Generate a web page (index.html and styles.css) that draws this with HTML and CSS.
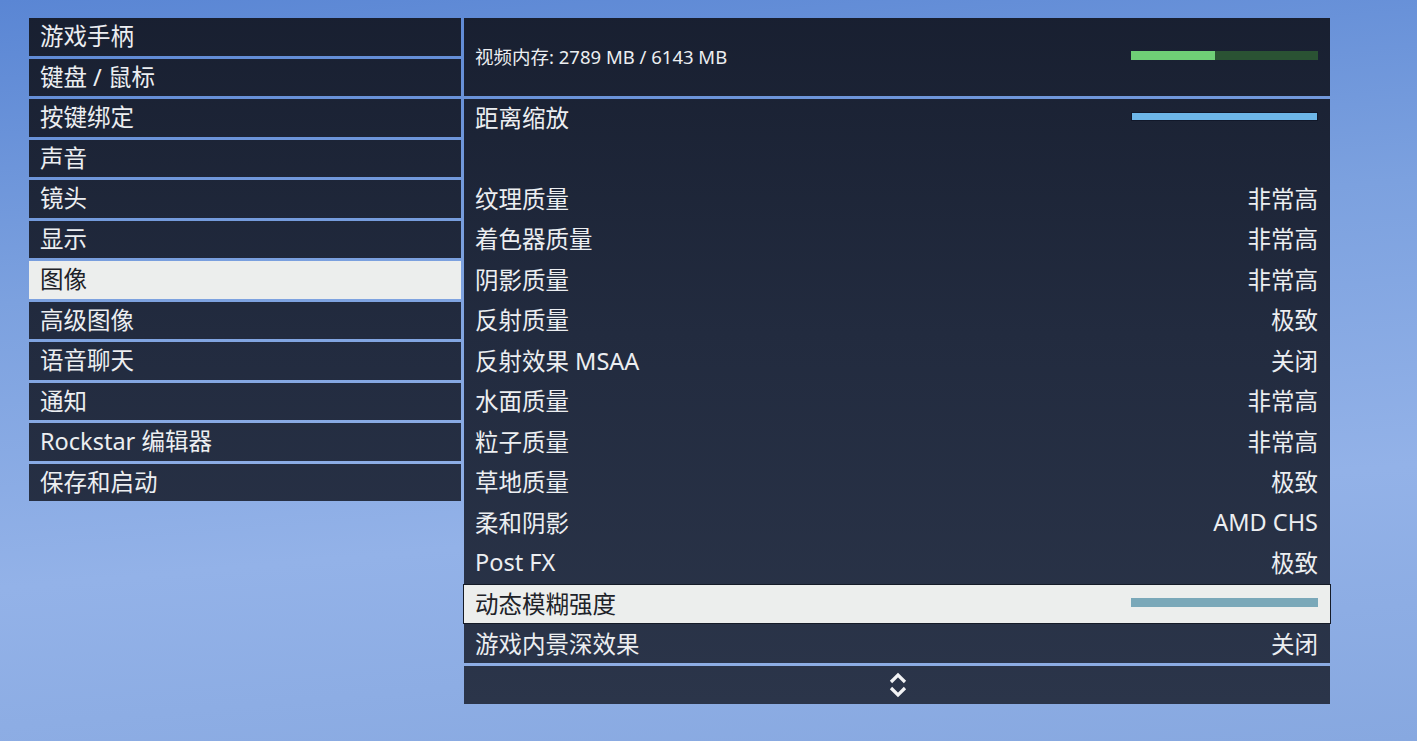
FILE: index.html
```html
<!DOCTYPE html>
<html>
<head>
    <meta charset="utf-8">
    <title>设置 - 图像</title>
    <link rel="stylesheet" href="styles.css">
</head>
<body>
    <div class="menu">
        <div class="tabs">
            <div class="tab">游戏手柄</div>
            <div class="tab">键盘 / 鼠标</div>
            <div class="tab">按键绑定</div>
            <div class="tab">声音</div>
            <div class="tab">镜头</div>
            <div class="tab">显示</div>
            <div class="tab active">图像</div>
            <div class="tab">高级图像</div>
            <div class="tab">语音聊天</div>
            <div class="tab">通知</div>
            <div class="tab">Rockstar 编辑器</div>
            <div class="tab">保存和启动</div>
        </div>

        <div class="panel">
            <div class="memory">
                <span class="memory-label">视频内存: 2789 MB / 6143 MB</span>
                <div class="bar mem-bar"><div class="mem-fill" style="width: 45%"></div></div>
            </div>

            <div class="options">
                <div class="row"><span>距离缩放</span><div class="bar blue-bar"></div></div>
                <div class="row"></div>
                <div class="row"><span>纹理质量</span><span>非常高</span></div>
                <div class="row"><span>着色器质量</span><span>非常高</span></div>
                <div class="row"><span>阴影质量</span><span>非常高</span></div>
                <div class="row"><span>反射质量</span><span>极致</span></div>
                <div class="row"><span>反射效果 MSAA</span><span>关闭</span></div>
                <div class="row"><span>水面质量</span><span>非常高</span></div>
                <div class="row"><span>粒子质量</span><span>非常高</span></div>
                <div class="row"><span>草地质量</span><span>极致</span></div>
                <div class="row"><span>柔和阴影</span><span>AMD CHS</span></div>
                <div class="row"><span>Post FX</span><span>极致</span></div>
                <div class="row active"><span>动态模糊强度</span><div class="bar grey-bar"></div></div>
                <div class="row"><span>游戏内景深效果</span><span>关闭</span></div>
            </div>

            <div class="scroller">
                <svg width="20" height="28" viewBox="0 0 20 28">
                    <path d="M3 11 L10 4 L17 11" fill="none" stroke="#f2f3f5" stroke-width="3.2"/>
                    <path d="M3 17 L10 24 L17 17" fill="none" stroke="#f2f3f5" stroke-width="3.2"/>
                </svg>
            </div>
        </div>
    </div>
</body>
</html>
```

FILE: styles.css
```css
html, body {
    height: 100%;
}
body {
    margin: 0;
    font-family: 'Noto Sans', 'Noto Sans CJK SC', sans-serif;
    color: #eceef1;
    background: linear-gradient(175deg, #5a86d4 0%, #7ca1df 35%, #93b2e8 68%, #87a8e0 100%);
    overflow: hidden;
}
.menu {
    display: flex;
    gap: 3px;
    padding: 18px 0 0 29px;
}
.tabs {
    width: 432px;
    display: flex;
    flex-direction: column;
    gap: 3px;
}
.tab, .memory, .options, .scroller {
    background: linear-gradient(180deg, #181f30 0%, #222b3f 45%, #2c364b 100%) fixed;
}
.tab {
    height: 37.5px;
    line-height: 36px;
    padding-left: 11px;
    font-size: 23.5px;
    box-sizing: border-box;
}
.tab.active {
    background: #eceeed;
    color: #202228;
}
.panel {
    width: 866px;
    display: flex;
    flex-direction: column;
    gap: 3px;
}
.memory {
    height: 78px;
    display: flex;
    align-items: center;
    justify-content: space-between;
    padding: 0 12px 0 11px;
}
.memory-label {
    font-size: 18.5px;
    margin-top: -3px;
}
.bar {
    width: 187px;
    height: 9px;
    box-sizing: border-box;
}
.mem-bar {
    background: #2a5233;
    margin-top: -3px;
}
.mem-fill {
    height: 100%;
    background: #6fcf76;
}
.blue-bar {
    background: #6db6e8;
    border: 1px solid #11182a;
}
.grey-bar {
    background: #7aa8b9;
}
.options {
    display: flex;
    flex-direction: column;
    gap: 3px;
}
.row {
    height: 37.5px;
    display: flex;
    align-items: center;
    justify-content: space-between;
    padding: 0 12px 2px 11px;
    box-sizing: border-box;
    font-size: 23.5px;
}
.row.active {
    background: #eceeed;
    color: #202228;
    box-shadow: 0 0 0 1px #151b28;
}
.scroller {
    height: 37.5px;
    display: flex;
    align-items: center;
    justify-content: center;
}
.scroller svg {
    margin-left: 1px;
}
```
